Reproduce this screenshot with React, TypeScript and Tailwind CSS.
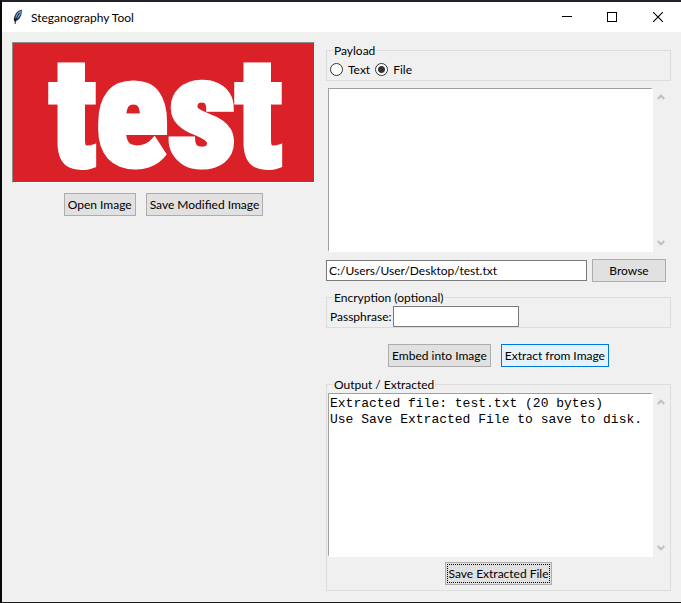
import { useState } from "react";
import type { ButtonHTMLAttributes, TextareaHTMLAttributes } from "react";
import clsx from "clsx";

function Feather() {
  return (
    <svg width="12" height="16" viewBox="0 0 12 16" aria-hidden="true">
      <path d="M9.8 0.4 C6 1.2 3 4.5 2 8.5 L2 11.8 L5.8 11.2 C8.6 8.6 10.2 5 9.8 0.4Z" fill="#2d3848" />
      <path d="M8.8 1.4 C6.2 3 3.8 5.4 3.4 9 L6 9 C8 6.6 9.2 4.2 8.8 1.4Z" fill="#6aa5f0" />
      <path d="M7.4 4 C5.5 6.6 4 9.6 3 15" fill="none" stroke="#10141c" strokeWidth="0.9" />
      <path d="M1.5 9 L2.7 13 L4.6 11.2Z" fill="#10141c" />
    </svg>
  );
}

function TitleBar() {
  return (
    <header className="flex h-[30px] items-center bg-white pl-[10px]">
      <Feather />
      <h1 className="ml-[7px] grow text-[12px] leading-[15px]">Steganography Tool</h1>
      <button type="button" aria-label="Minimize" className="flex h-full w-[44px] items-center justify-center">
        <svg width="10" height="10" shapeRendering="crispEdges"><rect y="4" width="10" height="1" fill="#000" /></svg>
      </button>
      <button type="button" aria-label="Maximize" className="flex h-full w-[46px] items-center justify-center">
        <svg width="10" height="10" shapeRendering="crispEdges"><rect x="0.5" y="0.5" width="9" height="9" fill="none" stroke="#000" /></svg>
      </button>
      <button type="button" aria-label="Close" className="flex h-full w-[46px] items-center justify-center">
        <svg width="10" height="10"><path d="M0 0L10 10M10 0L0 10" stroke="#000" strokeWidth="1.1" /></svg>
      </button>
    </header>
  );
}

function PushButton({ className, ...rest }: ButtonHTMLAttributes<HTMLButtonElement>) {
  return (
    <button
      type="button"
      className={clsx("flex h-[23px] items-center justify-center border whitespace-nowrap", className ?? "border-[#adadad] bg-[#e1e1e1]")}
      {...rest}
    />
  );
}

function Arrow({ down = false }: { down?: boolean }) {
  return (
    <svg width="8" height="6" viewBox="0 0 8 6" aria-hidden="true">
      <path d={down ? "M0.7 1L4 4.3L7.3 1" : "M0.7 5L4 1.7L7.3 5"} fill="none" stroke="#bfbfbf" strokeWidth="2" />
    </svg>
  );
}

function ScrolledText(props: TextareaHTMLAttributes<HTMLTextAreaElement>) {
  return (
    <div className="flex h-[164px] pr-px">
      <textarea
        className="min-w-0 grow resize-none overflow-hidden border-2 border-t border-l border-white border-t-[#a0a0a0] border-l-[#a0a0a0] bg-white px-px py-[2px] font-['Liberation_Mono',monospace] text-[13px] leading-[16px] outline-none"
        {...props}
      />
      <div className="flex w-[16px] shrink-0 flex-col items-center justify-between py-[6px]">
        <Arrow />
        <Arrow down />
      </div>
    </div>
  );
}

function Radio({ label, checked, onChange }: { label: string; checked: boolean; onChange: () => void }) {
  return (
    <label className="flex items-center gap-[5px]">
      <input
        type="radio"
        name="payload"
        checked={checked}
        onChange={onChange}
        className="size-[13px] appearance-none rounded-full border border-[#333] bg-white checked:bg-[radial-gradient(circle,#333_0_3px,#fff_4px)]"
      />
      {label}
    </label>
  );
}

export default function App() {
  const [mode, setMode] = useState("file");
  return (
    <div className="flex min-h-screen flex-col border-t-2 border-b border-l-2 border-t-[#20212b] border-b-[#1b1b1b] border-l-[#08090d] bg-[#f0f0f0] font-['Lato','Open_Sans',sans-serif] text-[12px] leading-[15px] text-black">
      <TitleBar />
      <main className="flex grow gap-[11px] px-[10px] pt-[10px] pb-[11px]">
        <section className="w-[303px] shrink-0">
          <div className="border border-t-[#8c8c8c] border-r-white border-b-white border-l-[#8c8c8c] bg-[#da2128]">
            <svg className="block w-full" viewBox="0 0 301 139" role="img" aria-label="test">
              <text
                x="153"
                y="122"
                textAnchor="middle"
                fontFamily="'Liberation Sans Narrow', 'Roboto Condensed', 'Open Sans', sans-serif"
                fontSize="150"
                fontWeight="700"
                fill="#fff"
                stroke="#fff"
                strokeWidth="7"
              >
                test
              </text>
            </svg>
          </div>
          <div className="mt-[10px] flex justify-center gap-[10px]">
            <PushButton><span className="px-[3px]">Open Image</span></PushButton>
            <PushButton><span className="px-[3px]">Save Modified Image</span></PushButton>
          </div>
        </section>

        <section className="min-w-0 grow">
          <fieldset className="mt-px border border-[#dcdcdc]">
            <legend className="ml-[6px] px-px">Payload</legend>
            <div className="flex h-[22px] items-center gap-[5px] pl-[3px]">
              <Radio label="Text" checked={mode === "text"} onChange={() => setMode("text")} />
              <Radio label="File" checked={mode === "file"} onChange={() => setMode("file")} />
            </div>
          </fieldset>

          <div className="mt-[7px] pr-px pl-[2px]">
            <ScrolledText aria-label="Payload text" />
          </div>

          <div className="mt-[7px] flex items-center gap-[5px] pr-[5px]">
            <input
              type="text"
              aria-label="Payload file path"
              defaultValue="C:/Users/User/Desktop/test.txt"
              className="h-[21px] min-w-0 grow border border-[#7a7a7a] bg-white px-[2px] outline-none"
            />
            <PushButton><span className="w-[72px]">Browse</span></PushButton>
          </div>

          <fieldset className="mt-[8px] border border-[#dcdcdc]">
            <legend className="ml-[6px] px-px">Encryption (optional)</legend>
            <div className="flex h-[22px] items-end gap-px pl-[3px]">
              <label htmlFor="passphrase" className="pb-[3px]">Passphrase:</label>
              <input id="passphrase" type="password" className="h-[21px] w-[126px] border border-[#7a7a7a] bg-white px-[2px] outline-none" />
            </div>
          </fieldset>

          <div className="mt-[16px] flex justify-center gap-[10px]">
            <PushButton><span className="px-[3px]">Embed into Image</span></PushButton>
            <PushButton className="border-[#0078d7] bg-[#e5f1fb]"><span className="px-[3px]">Extract from Image</span></PushButton>
          </div>

          <fieldset className="mt-[10px] border border-[#dcdcdc] pb-[5px]">
            <legend className="ml-[6px] px-px">Output / Extracted</legend>
            <div className="pt-px pl-px">
              <ScrolledText
                aria-label="Extracted output"
                readOnly
                value={"Extracted file: test.txt (20 bytes)\nUse Save Extracted File to save to disk."}
              />
            </div>
            <div className="mt-[5px] flex justify-center">
              <PushButton className="border-[#adadad] bg-[#e1e1e1] p-px">
                <span className="border border-dotted border-black leading-[17px]">Save Extracted File</span>
              </PushButton>
            </div>
          </fieldset>
        </section>
      </main>
    </div>
  );
}
